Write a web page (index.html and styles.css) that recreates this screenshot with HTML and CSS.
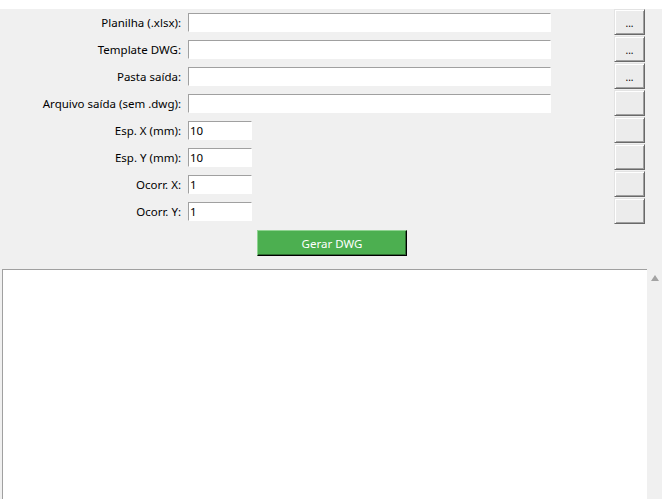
FILE: index.html
```html
<!DOCTYPE html>
<html lang="pt">

<head>
    <meta charset="UTF-8">
    <meta name="viewport" content="width=device-width, initial-scale=1.0">
    <title>Gerar DWG</title>
    <link rel="stylesheet" href="styles.css">
</head>

<body>
    <div class="top-strip"></div>

    <div class="window">
        <!-- Campos do formulario -->
        <div class="form-grid">
            <label class="field-label">Planilha (.xlsx):</label>
            <div class="field"><input type="text" class="entry entry-wide"></div>
            <div class="spacer"></div>
            <button class="tk-button">...</button>

            <label class="field-label">Template DWG:</label>
            <div class="field"><input type="text" class="entry entry-wide"></div>
            <div class="spacer"></div>
            <button class="tk-button">...</button>

            <label class="field-label">Pasta saída:</label>
            <div class="field"><input type="text" class="entry entry-wide"></div>
            <div class="spacer"></div>
            <button class="tk-button">...</button>

            <label class="field-label">Arquivo saída (sem .dwg):</label>
            <div class="field"><input type="text" class="entry entry-wide"></div>
            <div class="spacer"></div>
            <button class="tk-button"></button>

            <label class="field-label">Esp. X (mm):</label>
            <div class="field"><input type="text" class="entry entry-small" value="10"></div>
            <div class="spacer"></div>
            <button class="tk-button"></button>

            <label class="field-label">Esp. Y (mm):</label>
            <div class="field"><input type="text" class="entry entry-small" value="10"></div>
            <div class="spacer"></div>
            <button class="tk-button"></button>

            <label class="field-label">Ocorr. X:</label>
            <div class="field"><input type="text" class="entry entry-small" value="1"></div>
            <div class="spacer"></div>
            <button class="tk-button"></button>

            <label class="field-label">Ocorr. Y:</label>
            <div class="field"><input type="text" class="entry entry-small" value="1"></div>
            <div class="spacer"></div>
            <button class="tk-button"></button>
        </div>

        <div class="action-row">
            <button class="btn-gerar">Gerar DWG</button>
        </div>

        <!-- Area de log -->
        <div class="log-area">
            <div class="log-text"></div>
            <div class="scrollbar">
                <div class="arrow-up"></div>
            </div>
        </div>
    </div>
</body>
</html>
```

FILE: styles.css
```css
* {
    box-sizing: border-box;
}

body {
    margin: 0;
    padding: 0;
    background: #f0f0f0;
    font-family: 'Noto Sans', 'Liberation Sans', sans-serif;
    font-size: 11.5px;
    color: #000;
    overflow: hidden;
}

.top-strip {
    height: 9px;
    background: #ffffff;
}

.form-grid {
    display: grid;
    grid-template-columns: 181px 363px 49px 31px;
    grid-auto-rows: 27px;
    column-gap: 7px;
}

.field-label {
    text-align: right;
    align-self: center;
    white-space: nowrap;
    line-height: 19px;
}

.field {
    display: flex;
    align-items: center;
}

.entry {
    height: 19px;
    border: 1px solid #a0a0a0;
    border-right-color: #ffffff;
    border-bottom-color: #ffffff;
    background: #ffffff;
    font-family: inherit;
    font-size: 11.5px;
    padding: 0 1px;
    outline: none;
}

.entry-wide {
    width: 363px;
}

.entry-small {
    width: 64px;
}

.tk-button {
    height: 26px;
    width: 31px;
    padding: 2px 0 0 0;
    background: #ececec;
    border: none;
    border-top: 1px solid #e3e3e3;
    border-left: 1px solid #e3e3e3;
    border-right: 1px solid #696969;
    border-bottom: 1px solid #696969;
    box-shadow: inset 1px 1px 0 #ffffff, inset -1px -1px 0 #a0a0a0;
    font-family: inherit;
    font-size: 10px;
    line-height: 1;
    color: #000;
}

.action-row {
    display: flex;
    justify-content: center;
    padding: 5px 0 0 2px;
}

.btn-gerar {
    width: 150px;
    height: 26px;
    background: #4caf50;
    color: #ffffff;
    font-family: inherit;
    font-size: 11.5px;
    border: none;
    border-top: 1px solid #8fd391;
    border-left: 1px solid #8fd391;
    border-right: 1px solid #000000;
    border-bottom: 1px solid #000000;
    box-shadow: inset -1px -1px 0 #2e6b31;
}

.log-area {
    display: flex;
    margin: 13px 0 0 2px;
    height: 240px;
}

.log-text {
    flex: 1;
    background: #ffffff;
    border-top: 1px solid #a0a0a0;
    border-left: 1px solid #a0a0a0;
}

.scrollbar {
    width: 15px;
    background: #f0f0f0;
    display: flex;
    justify-content: center;
    padding-top: 6px;
}

.arrow-up {
    width: 0;
    height: 0;
    border-left: 4px solid transparent;
    border-right: 4px solid transparent;
    border-bottom: 6px solid #a3a3a3;
}
```
